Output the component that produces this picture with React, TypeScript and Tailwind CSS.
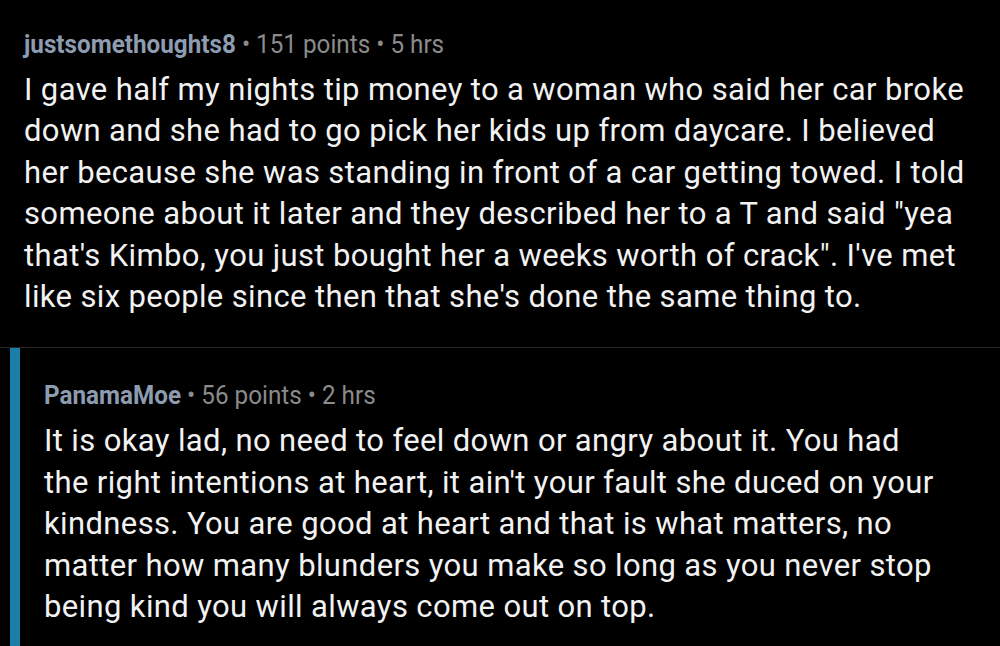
const body =
  "font-['Roboto',sans-serif] text-[31px] leading-[41.4px] tracking-[0.37px] text-[#f2f2f2] whitespace-nowrap mt-[9px]";

const first = [
  "I gave half my nights tip money to a woman who said her car broke",
  "down and she had to go pick her kids up from daycare. I believed",
  "her because she was standing in front of a car getting towed. I told",
  'someone about it later and they described her to a T and said "yea',
  'that\'s Kimbo, you just bought her a weeks worth of crack". I\'ve met',
  "like six people since then that she's done the same thing to.",
];

const reply = [
  "It is okay lad, no need to feel down or angry about it. You had",
  "the right intentions at heart, it ain't your fault she duced on your",
  "kindness. You are good at heart and that is what matters, no",
  "matter how many blunders you make so long as you never stop",
  "being kind you will always come out on top.",
];

function Meta({ user, points, age }: { user: string; points: string; age: string }) {
  return (
    <div className="font-['Roboto',sans-serif] text-[25px] leading-[30px] whitespace-nowrap">
      <span className="inline-block origin-left scale-x-[0.97]">
        <span className="font-bold text-[#8d9cb0]">{user}</span>
        <span className="text-[#8b8b8b]"> • {points} • {age}</span>
      </span>
    </div>
  );
}

function Lines({ lines }: { lines: string[] }) {
  return (
    <p className={body}>
      {lines.map((l, i) => (
        <span key={i}>
          {l}
          {i < lines.length - 1 && <br />}
        </span>
      ))}
    </p>
  );
}

export default function App() {
  return (
    <div className="w-[1000px] h-[646px] bg-black overflow-hidden">
      <div className="pl-[24px] pr-4 pt-[30px] pb-[30px] border-b border-[#262626]">
        <Meta user="justsomethoughts8" points="151 points" age="5 hrs" />
        <Lines lines={first} />
      </div>
      <div className="flex">
        <div className="ml-[10px] w-[10px] shrink-0 bg-[#1a7ea6] h-[320px]" />
        <div className="pl-[24px] pr-4 pt-[33px]">
          <Meta user="PanamaMoe" points="56 points" age="2 hrs" />
          <Lines lines={reply} />
        </div>
      </div>
    </div>
  );
}
